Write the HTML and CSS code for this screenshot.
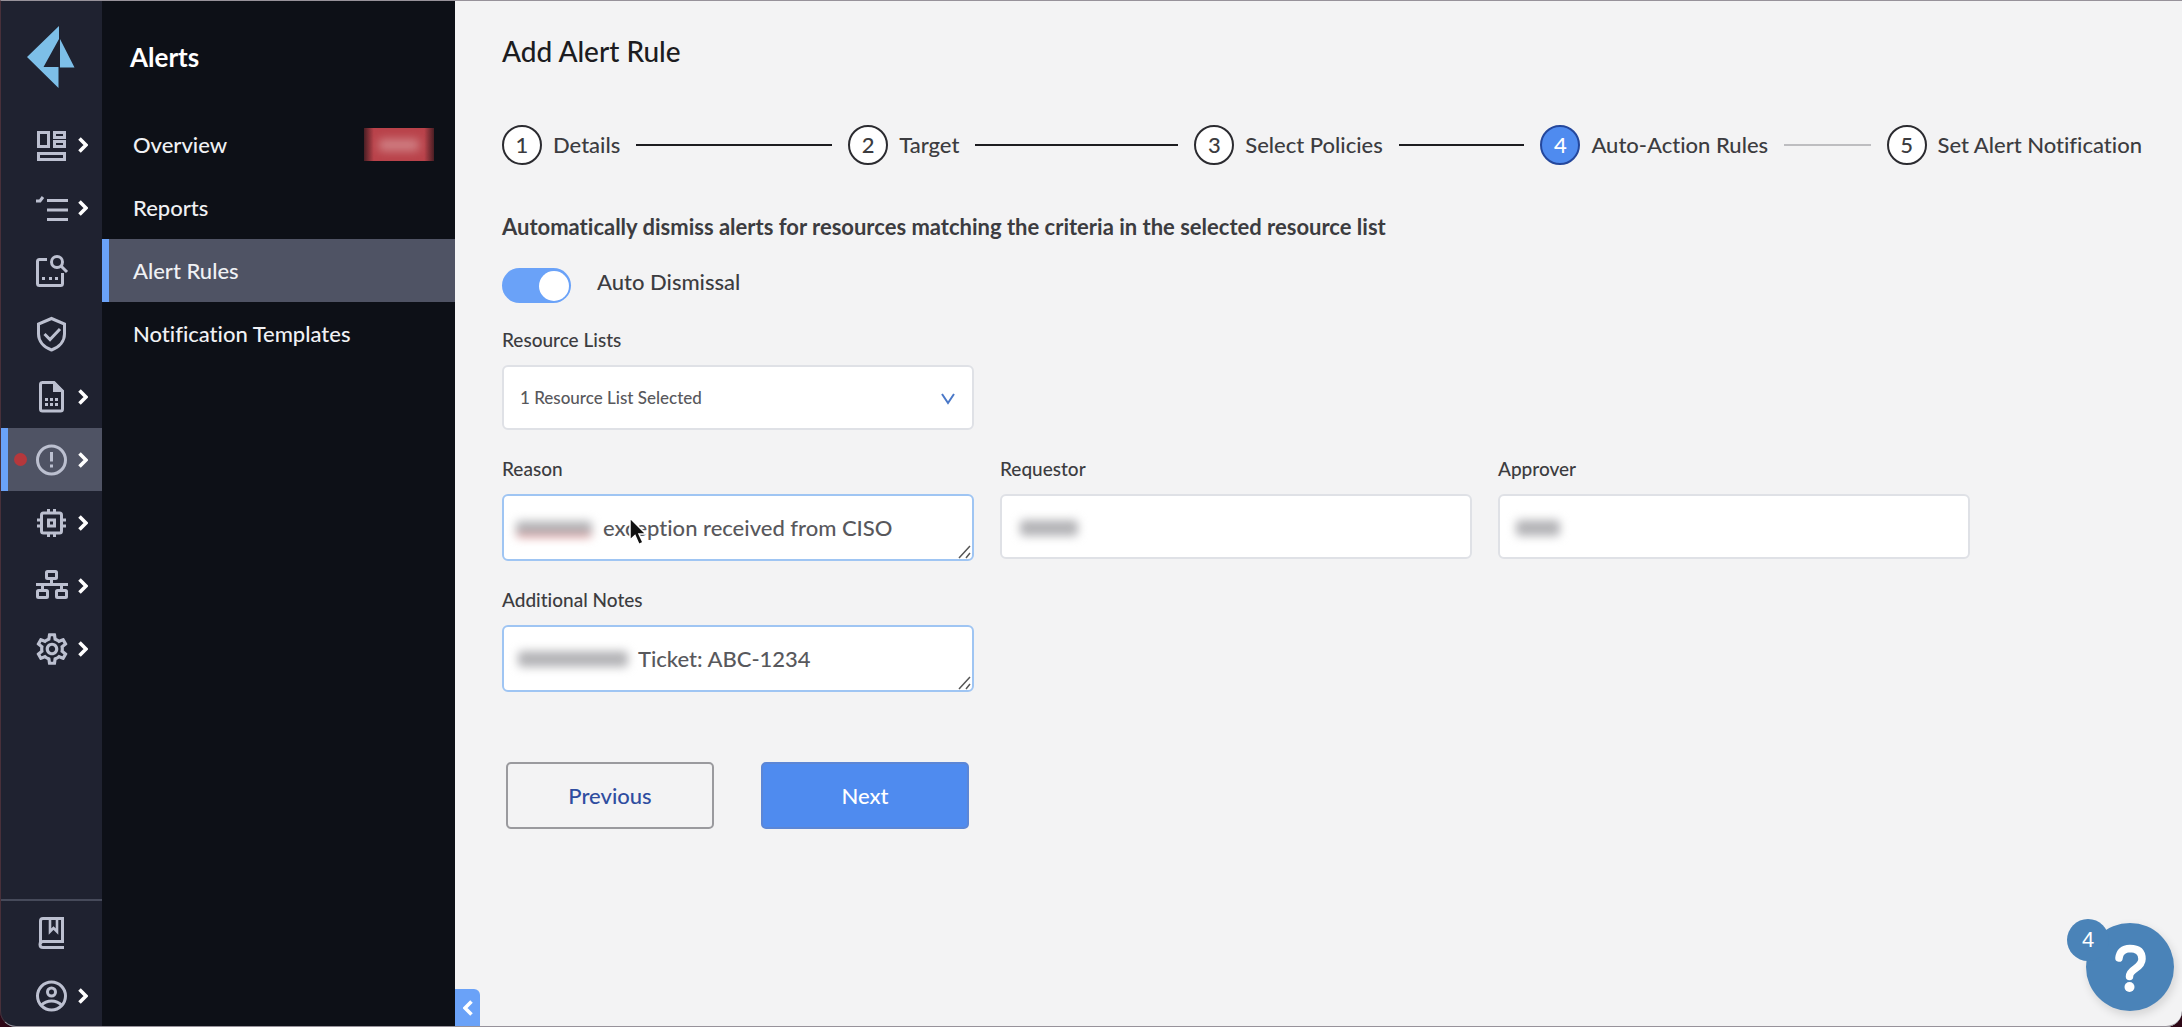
FILE: index.html
```html
<!DOCTYPE html>
<html lang="en">
<head>
<meta charset="utf-8">
<title>Add Alert Rule</title>
<meta name="viewport" content="width=device-width, initial-scale=1">
<link rel="stylesheet" href="styles.css">
</head>
<body>
<svg class="defs" aria-hidden="true">
  <symbol id="chevron" viewBox="0 0 10 16"><path d="M1.500 1.500 8 8l-6.500 6.500" fill="none" stroke="currentColor" stroke-width="3.600"/></symbol>
  <symbol id="grip" viewBox="0 0 16 16"><path d="M2 14 13 2M9 14l4-5" fill="none" stroke="#555" stroke-width="1.500"/></symbol>
</svg>
<div class="app">
  <nav class="rail" aria-label="Main">
    <a class="logo" href="#" aria-label="Home">
      <svg width="48" height="62" viewBox="0 0 48 62"><path fill="#7dbfe8" d="M0 31 32 0V13L16.500 41H31.500V62ZM33 13 47.500 41.500H33Z"/></svg>
    </a>
    <ul class="rail-list">
      <li><a class="rail-item" href="#" aria-label="Dashboard">
        <svg class="icon" viewBox="0 0 38 38"><path d="M5.500 6.500h10v14h-10zM21.500 6.500h10v5h-10zM21.500 15.500h10v5h-10zM5.500 27.500h26v6h-26z"/></svg>
        <svg class="arrow"><use href="#chevron"/></svg></a></li>
      <li><a class="rail-item" href="#" aria-label="Inventory">
        <svg class="icon" viewBox="0 0 38 38"><path d="M14 11.500h21M14 21h21M14 30.500h21M3 12h4l3-4"/></svg>
        <svg class="arrow"><use href="#chevron"/></svg></a></li>
      <li><a class="rail-item" href="#" aria-label="Investigate">
        <svg class="icon" viewBox="0 0 38 38"><path d="M14 7.500H6.500q-2 0-2 2V31.500q0 2 2 2H27.500q2 0 2-2V21M28 14l6 6"/><circle cx="24" cy="10" r="5.500"/><path class="solid" d="M9 25h3v3H9zM16 25h3v3h-3zM22 25h3v3h-3z"/></svg></a></li>
      <li><a class="rail-item" href="#" aria-label="Policies">
        <svg class="icon" viewBox="0 0 38 38"><path d="M18.500 3.500 31.500 9v10c0 7-5 13-13 16-8-3-13-9-13-16V9zM11.500 19l5.500 5.500L27 14"/></svg></a></li>
      <li><a class="rail-item" href="#" aria-label="Compliance">
        <svg class="icon" viewBox="0 0 38 38"><path d="M9 4.500H21L29.500 13V31q0 2-2 2H9.500q-2 0-2-2V6.500q0-2 2-2z"/><path class="solid" d="M20 4h2l9 9v1H20zM12 20h3v3h-3zM17 20h3v3h-3zM22 20h3v3h-3zM12 25h3v3h-3zM17 25h3v3h-3zM22 25h3v3h-3z"/></svg>
        <svg class="arrow"><use href="#chevron"/></svg></a></li>
      <li><a class="rail-item active" href="#" aria-label="Alerts" aria-current="true">
        <span class="dot"></span>
        <svg class="icon" viewBox="0 0 38 38"><circle cx="18.500" cy="19" r="14"/><path d="M18.500 11v9.500M18.500 23.500v3"/></svg>
        <svg class="arrow"><use href="#chevron"/></svg></a></li>
      <li><a class="rail-item" href="#" aria-label="Compute">
        <svg class="icon" viewBox="0 0 38 38"><rect x="8.500" y="9" width="20" height="20" rx="2"/><path d="M15.500 5v4M21.500 5v4M15.500 29v4M21.500 29v4M4 16h4M4 22h4M29 16h4M29 22h4"/><rect x="15.500" y="16" width="6" height="6"/></svg>
        <svg class="arrow"><use href="#chevron"/></svg></a></li>
      <li><a class="rail-item" href="#" aria-label="Network">
        <svg class="icon" viewBox="0 0 38 38"><rect x="13.500" y="4.500" width="10" height="7" rx="1"/><rect x="4.500" y="23.500" width="10" height="7" rx="1"/><rect x="23.500" y="23.500" width="10" height="7" rx="1"/><path d="M3 17.500h32M18.500 12v5M9.500 18v5M28.500 18v5"/></svg>
        <svg class="arrow"><use href="#chevron"/></svg></a></li>
      <li><a class="rail-item" href="#" aria-label="Settings">
        <svg class="icon" viewBox="0 0 24 24"><path class="solid" d="M19.430 12.980c.04-.32.07-.64.07-.98s-.03-.66-.07-.98l2.110-1.650c.19-.15.24-.42.12-.64l-2-3.460c-.09-.16-.26-.25-.44-.25-.06 0-.12.01-.17.03l-2.490 1c-.52-.4-1.080-.73-1.690-.98l-.38-2.650C14.460 2.180 14.250 2 14 2h-4c-.25 0-.46.18-.49.42l-.38 2.650c-.61.25-1.170.59-1.690.98l-2.490-1c-.06-.02-.12-.03-.18-.03-.17 0-.34.09-.43.25l-2 3.460c-.13.22-.07.49.12.64l2.110 1.650c-.04.32-.07.65-.07.98s.03.66.07.98l-2.110 1.650c-.19.15-.24.42-.12.64l2 3.460c.09.16.26.25.44.25.06 0 .12-.01.17-.03l2.490-1c.52.4 1.080.73 1.690.98l.38 2.650c.03.24.24.42.49.42h4c.25 0 .46-.18.49-.42l.38-2.650c.61-.25 1.170-.59 1.690-.98l2.490 1c.06.02.12.03.18.03.17 0 .34-.09.43-.25l2-3.460c.12-.22.07-.49-.12-.64l-2.110-1.650zm-1.980-1.710c.04.31.05.52.05.73 0 .21-.02.43-.05.73l-.14 1.130.89.7 1.080.84-.7 1.210-1.270-.51-1.040-.42-.9.68c-.43.32-.84.56-1.250.73l-1.060.43-.16 1.130-.2 1.350h-1.400l-.19-1.350-.16-1.130-1.060-.43c-.43-.18-.83-.41-1.230-.71l-.91-.7-1.060.43-1.270.51-.7-1.210 1.080-.84.89-.7-.14-1.130c-.03-.31-.05-.54-.05-.74s.02-.43.05-.73l.14-1.130-.89-.7-1.080-.84.7-1.210 1.270.51 1.040.42.9-.68c.43-.32.84-.56 1.250-.73l1.060-.43.16-1.130.2-1.350h1.390l.19 1.350.16 1.130 1.060.43c.43.18.83.41 1.230.71l.91.7 1.060-.43 1.270-.51.7 1.210-1.070.85-.89.7.14 1.130zM12 8c-2.210 0-4 1.790-4 4s1.790 4 4 4 4-1.790 4-4-1.790-4-4-4zm0 6c-1.100 0-2-.9-2-2s.9-2 2-2 2 .9 2 2-.9 2-2 2z"/></svg>
        <svg class="arrow"><use href="#chevron"/></svg></a></li>
    </ul>
    <ul class="rail-foot">
      <li><a class="rail-item" href="#" aria-label="Resources">
        <svg class="icon" viewBox="0 0 38 38"><path d="M31 27.500H10q-3 0-3 3t3 3H31M7.500 30V7q0-2.500 2.500-2.500H29.500V27.500"/><path d="M17 4v13.500l3.500-3.500 3.500 3.500V4" stroke-width="2.600"/></svg></a></li>
      <li><a class="rail-item" href="#" aria-label="Profile">
        <svg class="icon" viewBox="0 0 38 38"><circle cx="18.500" cy="19" r="14"/><circle cx="18.500" cy="15" r="4"/><path d="M8 28.500q4.500-4.500 10.500-4.500t10.500 4.500"/></svg>
        <svg class="arrow"><use href="#chevron"/></svg></a></li>
    </ul>
  </nav>

  <nav class="menu" aria-label="Alerts">
    <h2 class="menu-title">Alerts</h2>
    <ul>
      <li><a class="menu-item" href="#">Overview <span class="count"><span class="count-blur"></span></span></a></li>
      <li><a class="menu-item" href="#">Reports</a></li>
      <li><a class="menu-item active" href="#" aria-current="page">Alert Rules</a></li>
      <li><a class="menu-item" href="#">Notification Templates</a></li>
    </ul>
    <button class="collapse" type="button" aria-label="Collapse menu"><svg class="arrow"><use href="#chevron"/></svg></button>
  </nav>

  <main class="main">
    <h1>Add Alert Rule</h1>
    <ol class="steps">
      <li class="step"><span class="num">1</span><span>Details</span></li>
      <li class="step"><span class="num">2</span><span>Target</span></li>
      <li class="step"><span class="num">3</span><span>Select Policies</span></li>
      <li class="step current" aria-current="step"><span class="num">4</span><span>Auto-Action Rules</span></li>
      <li class="step"><span class="num">5</span><span>Set Alert Notification</span></li>
    </ol>
    <form class="form">
      <h3>Automatically dismiss alerts for resources matching the criteria in the selected resource list</h3>
      <label class="toggle"><input type="checkbox" checked><span>Auto Dismissal</span></label>
      <div class="fields">
        <div class="field start">
          <label for="lists">Resource Lists</label>
          <div class="control">
            <select id="lists"><option>1 Resource List Selected</option></select>
            <svg class="caret" viewBox="0 0 16 16"><path d="M2 3l6 9 6-9" fill="none" stroke="#4a78c8" stroke-width="2"/></svg>
          </div>
        </div>
        <div class="field start">
          <label for="reason">Reason</label>
          <div class="control">
            <textarea class="reason" id="reason" rows="1" spellcheck="false">exception received from CISO</textarea>
            <span class="redacted redacted-reason"></span>
            <svg class="grip"><use href="#grip"/></svg>
            <svg class="cursor" viewBox="0 0 20 30"><path d="M2 2V24l5-4.500 4 9 4-2-4-8.500h7z" fill="#111" stroke="#fff" stroke-width="1.500"/></svg>
          </div>
        </div>
        <div class="field">
          <label for="requestor">Requestor</label>
          <div class="control"><input id="requestor" type="text"><span class="redacted redacted-requestor"></span></div>
        </div>
        <div class="field">
          <label for="approver">Approver</label>
          <div class="control"><input id="approver" type="text"><span class="redacted redacted-approver"></span></div>
        </div>
        <div class="field start">
          <label for="notes">Additional Notes</label>
          <div class="control">
            <textarea class="notes" id="notes" rows="1" spellcheck="false">Ticket: ABC-1234</textarea>
            <span class="redacted redacted-notes"></span>
            <svg class="grip"><use href="#grip"/></svg>
          </div>
        </div>
      </div>
      <div class="actions">
        <button class="btn" type="button">Previous</button>
        <button class="btn primary" type="submit">Next</button>
      </div>
    </form>
  </main>
  <button class="help" type="button" aria-label="Help, 4 items">
    <svg viewBox="0 0 88 88" width="88" height="88"><path d="M33 35q1-9 11-9.500 12 0 12 10.500 0 5-6.500 9.500-6 4-6 8" fill="none" stroke="#fff" stroke-width="7.500" stroke-linecap="round"/><circle cx="43.500" cy="64" r="5" fill="#fff"/></svg>
    <span class="help-badge">4</span>
  </button>
</div>
</body>
</html>
```

FILE: styles.css
```css
* { box-sizing: border-box; }

body {
  margin: 0;
  background: #2e0716;
  color: #3c3c40;
  font-family: Lato, "Liberation Sans", sans-serif;
  font-size: 22px;
  font-weight: 500;
  line-height: 28px;
  font-variant-ligatures: none;
}

/* thin window frame */
body::after {
  content: "";
  position: fixed;
  inset: 0;
  border: 1px solid #97929a;
  border-left-color: #48303a;
  border-right: 0;
  border-radius: 0 0 16px 16px;
  pointer-events: none;
}

ul, ol { margin: 0; padding: 0; list-style: none; }
h1, h2, h3 { margin: 0; }
a { color: inherit; text-decoration: none; }
input, textarea, select, button { font: inherit; font-variant-ligatures: none; color: inherit; }
.defs { position: absolute; width: 0; height: 0; }

.app {
  display: flex;
  min-height: 100vh;
  padding-left: 1px;
  border-radius: 0 0 16px 16px;
  overflow: hidden;
  background: #1f2230;
}

/* icon rail */
.rail {
  display: flex;
  flex-direction: column;
  flex: none;
  width: 101px;
  background: #1f2230;
  color: #fff;
}
.logo { display: block; height: 113px; padding: 26px 0 0 26px; }
.logo svg { display: block; }
.rail-foot { margin-top: auto; border-top: 2px solid #464a5a; }
.rail-item {
  position: relative;
  display: flex;
  align-items: center;
  gap: 7px;
  height: 63px;
  padding-left: 32px;
}
.rail-item.active { background: #4f5364; box-shadow: inset 7px 0 #6aa2f8; }
.icon {
  flex: none;
  width: 38px;
  height: 38px;
  fill: none;
  stroke: #bcc0d0;
  stroke-width: 3;
}
.icon .solid { fill: #bcc0d0; stroke: none; }
.arrow { flex: none; width: 10px; height: 16px; }
.dot {
  position: absolute;
  left: 13px;
  width: 13px;
  height: 13px;
  border-radius: 50%;
  background: #b5383c;
}

/* section menu */
.menu {
  position: relative;
  flex: none;
  width: 353px;
  background: #0d1017;
  color: #f0f1f4;
}
.menu-title {
  height: 113px;
  padding: 40px 28px 0;
  font-size: 26px;
  line-height: 34px;
  color: #fff;
}
.menu-item {
  display: flex;
  align-items: center;
  justify-content: space-between;
  height: 63px;
  padding: 0 21px 0 31px;
}
.menu-item.active { background: #4f5364; box-shadow: inset 7px 0 #6aa2f8; }
.count {
  display: flex;
  align-items: center;
  justify-content: center;
  width: 70px;
  height: 33px;
  background: linear-gradient(90deg, #4a1e24, #b9424a 14%, #b9424a 86%, #4a1e24);
}
.count-blur { width: 40px; height: 12px; background: #d08084; filter: blur(5px); }
.collapse {
  position: absolute;
  left: 100%;
  bottom: 0;
  display: flex;
  align-items: center;
  justify-content: center;
  width: 25px;
  height: 38px;
  padding: 0;
  border: 0;
  border-radius: 0 6px 0 0;
  background: #6aa2f8;
  color: #fff;
}
.collapse .arrow { transform: rotate(180deg); }

/* page */
.main {
  flex: 1;
  min-width: 0;
  padding: 34px 40px 40px 47px;
  background: #f3f3f4;
}
h1 { font-size: 28px; font-weight: 500; line-height: 34px; color: #1c1c20; }

.steps {
  display: grid;
  grid-template-columns: repeat(4, 1fr) auto;
  margin-top: 57px;
}
.step {
  display: flex;
  align-items: center;
  gap: 11px;
  white-space: nowrap;
}
.step:not(:last-child)::after {
  content: "";
  flex: 1;
  height: 2px;
  margin: 0 16px 0 5px;
  background: #1c1c20;
}
.step.current::after { background: #bdbdc0 !important; }
.num {
  display: flex;
  align-items: center;
  justify-content: center;
  width: 40px;
  height: 40px;
  border: 2px solid #2b2b30;
  border-radius: 50%;
  background: #fff;
}
.current .num { border-color: #24479c; background: #4f8bef; color: #fff; }

.form { margin-top: 48px; }
h3 { font-size: 22px; line-height: 28px; }
.toggle {
  display: flex;
  align-items: flex-start;
  gap: 26px;
  width: max-content;
  height: 35px;
  margin: 27px 0 24px;
}
.toggle input {
  appearance: none;
  display: flex;
  align-items: center;
  justify-content: flex-end;
  width: 69px;
  height: 35px;
  margin: 0;
  padding: 2px;
  border-radius: 18px;
  background: #6aa2f8;
}
.toggle input::before {
  content: "";
  width: 30px;
  height: 30px;
  border-radius: 50%;
  background: #fff;
}

.fields {
  display: grid;
  grid-template-columns: repeat(3, 1fr);
  align-items: start;
  gap: 26px;
  max-width: 1468px;
}
.start { grid-column-start: 1; }
.field > label {
  display: block;
  margin-bottom: 12px;
  font-size: 19px;
  line-height: 26px;
}
.control { position: relative; }
.control input, .control select, .control textarea {
  display: block;
  width: 100%;
  height: 65px;
  padding: 0 16px;
  border: 2px solid #dfe1e6;
  border-radius: 6px;
  background: #fff;
  color: #58585c;
}
.control select { appearance: none; font-size: 17px; }
.control textarea {
  height: 67px;
  padding-top: 18px;
  border-color: #9fc5f3;
  line-height: 28px;
  resize: none;
  overflow: hidden;
}
.control .reason { padding-left: 99px; }
.control .notes { padding-left: 134px; }
.caret { position: absolute; right: 18px; top: 26px; width: 16px; height: 16px; }
.grip { position: absolute; right: 1px; bottom: 1px; width: 16px; height: 16px; }
.cursor { position: absolute; left: 126px; top: 22px; width: 20px; height: 30px; }

/* hidden values shown as soft smudges */
.redacted { position: absolute; height: 16px; background: #b4b4b7; filter: blur(5px); border-radius: 4px; }
.redacted-reason { left: 14px; top: 27px; width: 76px; border-bottom: 3px solid #e08080; }
.redacted-requestor { left: 20px; top: 26px; width: 58px; }
.redacted-approver { left: 18px; top: 26px; width: 44px; }
.redacted-notes { left: 16px; top: 26px; width: 110px; }

.actions { display: flex; gap: 47px; margin: 70px 0 0 4px; }
.btn {
  width: 208px;
  height: 67px;
  border: 2px solid #9a9a9e;
  border-radius: 5px;
  background: transparent;
  color: #2f4da0;
}
.btn.primary { border-color: #5b86d6; background: #4f8bef; color: #fff; }

/* floating help */
.help {
  position: fixed;
  right: 8px;
  bottom: 16px;
  width: 88px;
  height: 88px;
  padding: 0;
  border: 0;
  border-radius: 50%;
  background: #4a83b8;
  color: #fff;
  box-shadow: 2px 4px 10px #0002;
}
.help svg { display: block; }
.help-badge {
  position: absolute;
  left: -19px;
  top: -4px;
  width: 42px;
  height: 42px;
  border-radius: 50%;
  background: #4a83b8;
  font-family: "Liberation Sans", sans-serif;
  font-size: 22px;
  line-height: 42px;
}
```
